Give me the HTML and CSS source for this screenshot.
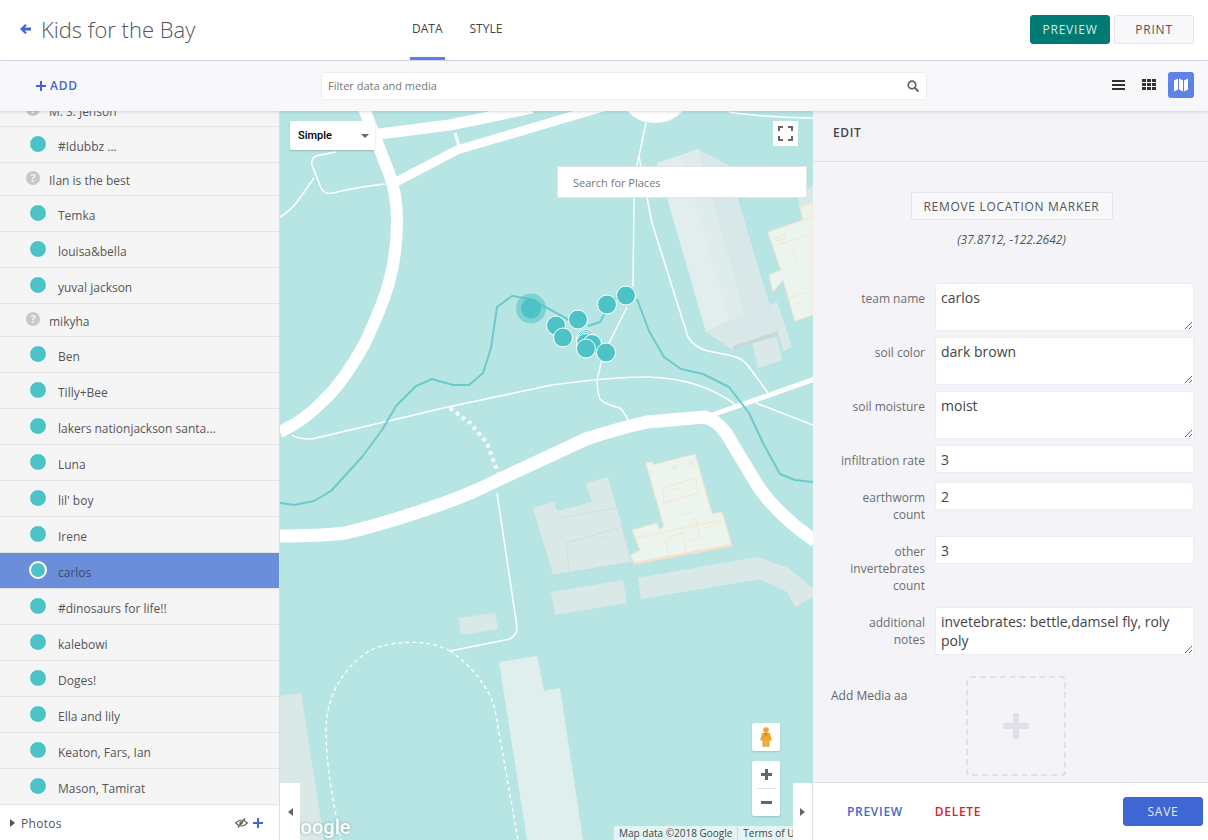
FILE: index.html
```html
<!DOCTYPE html>
<html lang="en">
<head>
    <meta charset="UTF-8">
    <title>Kids for the Bay</title>
    <link rel="stylesheet" href="styles.css">
</head>
<body>
    <header class="topbar">
        <div class="title-block">
            <svg class="back-icon" width="11" height="10" viewBox="0 0 11 10"><path d="M5.200 0 L6.800 1.600 L4.600 3.600 H11 V6.400 H4.600 L6.800 8.400 L5.200 10 L0 5 Z"/></svg>
            <span class="title">Kids for the Bay</span>
        </div>
        <nav class="tabs">
            <a class="tab tab-active">DATA</a>
            <a class="tab">STYLE</a>
        </nav>
        <div class="top-actions">
            <button class="btn btn-green">PREVIEW</button>
            <button class="btn">PRINT</button>
        </div>
    </header>

    <section class="toolbar">
        <div class="add-link">
            <svg width="10" height="10" viewBox="0 0 10 10"><path d="M4 0 H6 V4 H10 V6 H6 V10 H4 V6 H0 V4 H4 Z"/></svg>
            <span>ADD</span>
        </div>
        <div class="filter">
            <span>Filter data and media</span>
            <svg width="12" height="12" viewBox="0 0 12 12"><circle cx="5" cy="5" r="3.800" fill="none" stroke="#666" stroke-width="1.700"/><path d="M8 8 L11 11" stroke="#666" stroke-width="2" stroke-linecap="round"/></svg>
        </div>
        <div class="view-icons">
            <svg class="icon-list" width="13" height="10" viewBox="0 0 13 10"><path d="M0 0 H13 V2 H0 Z M0 4 H13 V6 H0 Z M0 8 H13 V10 H0 Z" fill="#333"/></svg>
            <svg class="icon-grid" width="14" height="11" viewBox="0 0 14 11"><path d="M0 0 H4 V3 H0 Z M5 0 H9 V3 H5 Z M10 0 H14 V3 H10 Z M0 4 H4 V7 H0 Z M5 4 H9 V7 H5 Z M10 4 H14 V7 H10 Z M0 8 H4 V11 H0 Z M5 8 H9 V11 H5 Z M10 8 H14 V11 H10 Z" fill="#333"/></svg>
            <span class="map-toggle">
                <svg width="14" height="14" viewBox="0 0 14 14"><path d="M0 2.500 L4 0.500 V11.500 L0 13.500 Z M5 0.500 L9 2.500 V13.500 L5 11.500 Z M10 2.500 L14 0.500 V11.500 L10 13.500 Z" fill="#fff"/></svg>
            </span>
        </div>
    </section>

    <main class="workspace">
        <aside class="sidebar">
            <ul class="rows">
                <li class="row row-none"><i class="no-loc">?</i>M. S. Jenson</li>
                <li class="row"><i class="dot"></i>#Idubbz ...</li>
                <li class="row row-none"><i class="no-loc">?</i>Ilan is the best</li>
                <li class="row"><i class="dot"></i>Temka</li>
                <li class="row"><i class="dot"></i>louisa&amp;bella</li>
                <li class="row"><i class="dot"></i>yuval jackson</li>
                <li class="row row-none"><i class="no-loc">?</i>mikyha</li>
                <li class="row"><i class="dot"></i>Ben</li>
                <li class="row"><i class="dot"></i>Tilly+Bee</li>
                <li class="row"><i class="dot"></i>lakers nationjackson santa...</li>
                <li class="row"><i class="dot"></i>Luna</li>
                <li class="row"><i class="dot"></i>lil' boy</li>
                <li class="row"><i class="dot"></i>Irene</li>
                <li class="row row-selected"><i class="dot"></i>carlos</li>
                <li class="row"><i class="dot"></i>#dinosaurs for life!!</li>
                <li class="row"><i class="dot"></i>kalebowi</li>
                <li class="row"><i class="dot"></i>Doges!</li>
                <li class="row"><i class="dot"></i>Ella and lily</li>
                <li class="row"><i class="dot"></i>Keaton, Fars, Ian</li>
                <li class="row"><i class="dot"></i>Mason, Tamirat</li>
            </ul>
            <div class="layer-bar">
                <svg class="caret" width="5" height="8" viewBox="0 0 5 8"><path d="M0 0 L5 4 L0 8 Z" fill="#555"/></svg>
                <span class="layer-name">Photos</span>
                <svg class="eye" width="13" height="10" viewBox="0 0 13 10"><path d="M0.700 5 Q6.500 -1 12.300 5 Q6.500 11 0.700 5 Z" fill="none" stroke="#666" stroke-width="1.200"/><circle cx="6" cy="5" r="1.800" fill="#666"/><path d="M3 9.500 L10 0.500" stroke="#666" stroke-width="1.400"/></svg>
                <svg width="10" height="10" viewBox="0 0 10 10"><path d="M4 0 H6 V4 H10 V6 H6 V10 H4 V6 H0 V4 H4 Z" fill="#3f66d2"/></svg>
            </div>
        </aside>

        <section class="map">
            <svg class="map-art" width="533" height="729" viewBox="280 111 533 729">
                <g class="bld">
                    <path d="M533,508 554,502 557,511 592,502 586,483 608,477 632,562 553,575Z"/>
                    <path d="M551,592 623,580 627,603 555,615Z"/>
                    <path d="M638,578 756,557 787,567 813,588 813,597 795,607 787,592 760,579 641,599Z"/>
                    <path d="M459,618 495,613 498,629 461,635Z"/>
                    <path d="M280,696 301,693 324,840 280,840Z"/>
                    <path d="M770,305 777,302 792,347 783,351Z"/>
                    <path d="M752,343 777,337 782,360 758,368Z"/>
                    <path d="M798,197 813,185 813,205 800,210Z"/>
                </g>
                <path class="bld-light" d="M499,662 537,656 544,691 560,688 583,840 527,840Z"/>
                <path d="M657,163 698,149 728,165 778,333 733,350 706,332Z" fill="#d8e7e7"/>
                <path d="M657,163 682,155 730,320 706,332Z" fill="#e2eeee"/>
                <path d="M682,155 698,149 745,315 730,320Z" fill="#dfecec"/>
                <path d="M706,332 730,320 733,350Z" fill="#d9e7e7"/>
                <path d="M733,346 778,331 778,335 733,350Z" fill="#c7d8d9"/>
                <path class="bld-line" d="M559,518 617,508 M566,543 622,527 630,560 M566,543 569,572 M553,575 632,562 M573,552 l3,-1 M590,546 l3,-1 M604,538 l4,-1 M618,540 l2,-1"/>
                <path class="peach" d="M646,463 652,462 653,465 695,454 712,514 722,512 732,546 634,564 631,555 640,550 632,530 657,523 659,529 664,527Z"/>
                <path class="peach-line" d="M662,488 696,478 698,493 664,503Z M635,538 722,520 M666,540 683,532 686,553 669,557Z M688,525 696,518 700,538 690,542 M704,528 722,522 M673,466 l4,-1 0,3 -4,1Z M689,462 l3,-1 1,4 -3,1Z M680,515 l12,-3 M671,490 l9,-2"/>
                <path class="peach-edge" d="M634,563 732,545"/>
                <path class="peach" d="M768,232 803,220 813,217 813,315 795,321 783,280 773,292 769,275 781,270Z"/>
                <path class="peach" d="M800,207 813,203 813,217 803,220Z"/>
                <path class="peach-line" d="M777,245 805,236 M775,238 l10,-3 1,3 -10,3Z M793,250 797,262 M785,300 806,292 M795,304 l8,-3"/>

                <g class="path-thin">
                    <path d="M336,152 Q318,155 314,157 Q311,160 312,165 L321,188 Q325,195 333,193 Q357,187 385,184"/>
                    <path d="M314,178 Q300,198 297,202 Q290,211 280,217"/>
                    <path d="M646,123 L637,165 L634,198 L633,287"/>
                    <path d="M639,157 L652,223 L688,337 Q695,348 708,351 Q730,355 736,357 Q744,360 749,367 L768,393"/>
                    <path d="M729,112 Q760,117 813,118"/>
                    <path d="M627,307 L612,337 Q604,352 601,363 L597,380 Q598,398 601,400 Q605,404 620,408 Q626,414 630,425"/>
                    <path d="M292,435 Q297,439 312,439 L448,407 L552,385 Q610,377 647,377 Q700,378 736,405"/>
                    <path d="M756,403 L813,425"/>
                    <path d="M497,493 L517,627 Q517,635 510,639 L450,651"/>
                </g>
                <path class="path-dash" d="M450,651 C430,640 400,640 375,648 C350,660 326,690 326,730 C326,770 335,810 341,840"/>
                <path class="path-dash" d="M450,651 C475,668 490,690 495,710 L518,840"/>
                <path class="path-dot" d="M450,408 L470,423 L487,443 L498,473"/>

                <g class="road">
                    <ellipse cx="655" cy="100" rx="31" ry="23" fill="#fff" stroke="none"/>
                    <path stroke-width="12" d="M363,106 L389,173 Q397,195 397,220 C397,270 385,300 365,343 C350,370 335,390 324,400 C310,415 295,425 280,432"/>
                    <path stroke-width="11" d="M379,134 L450,125 L532,108"/>
                    <path stroke-width="9" d="M396,182 L457,150 L613,104"/>
                    <path stroke-width="3" d="M455,133 L459,146"/>
                    <path stroke-width="13" d="M278,536 Q320,536 345,533 Q375,526 409,515 Q450,502 477,490 L498,480 L586,439 Q620,428 647,422 L705,417 Q716,420 726,433 L753,478 Q760,490 766,497 Q785,520 815,541"/>
                    <path stroke-width="5" d="M712,415 L815,379"/>
                </g>

                <g class="trail">
                    <path d="M569,320 L549,309 L530,299 L512,296 L497,307 L491,348 L483,373 L469,385 L453,385 L432,379 L416,386 L396,406 L382,430 L362,457 L331,491 L314,501 L294,505 L280,503"/>
                    <path d="M588,326 L600,322 L606,311 L617,297"/>
                    <path d="M637,299 L649,331 L664,357 L681,369 L703,374 L729,387 L749,413 L763,443 L780,474 L795,480 L813,482"/>
                </g>

                <circle cx="531" cy="308.500" r="15" fill="#4dc3c8" opacity=".55"/>
                <circle cx="531" cy="308.500" r="10" fill="#4dc3c8"/>
                <g class="marker">
                    <circle cx="556" cy="325.500" r="9.500"/>
                    <circle cx="578" cy="319.500" r="9.500"/>
                    <circle cx="563" cy="337.500" r="9.500"/>
                    <circle cx="607" cy="304.500" r="9.500"/>
                    <circle cx="626" cy="295.500" r="9.500"/>
                    <circle cx="586" cy="339" r="9.500"/>
                    <circle cx="586" cy="341" r="9.500"/>
                    <circle cx="586" cy="343" r="9.500"/>
                    <circle cx="592" cy="344" r="9.500"/>
                    <circle cx="606" cy="352.500" r="9.500"/>
                    <circle cx="586" cy="348.500" r="9.500"/>
                </g>
            </svg>

            <div class="map-type">
                <span>Simple</span>
                <svg width="8" height="4" viewBox="0 0 8 4"><path d="M0 0 H8 L4 4 Z" fill="#666"/></svg>
            </div>
            <div class="map-full">
                <svg width="15" height="15" viewBox="0 0 15 15"><path d="M1 5 V1 H5 M10 1 H14 V5 M14 10 V14 H10 M5 14 H1 V10" fill="none" stroke="#666" stroke-width="2"/></svg>
            </div>
            <div class="place-search">Search for Places</div>
            <div class="pegman">
                <svg width="12" height="20" viewBox="0 0 12 20"><circle cx="6" cy="3" r="2.800" fill="#f5a623"/><path d="M2.500 6 H9.500 L11.500 13 L10 13.500 L9.200 10.500 V19.500 H6.500 V13 H5.500 V19.500 H2.800 V10.500 L2 13.500 L0.500 13 Z" fill="#f5a623" stroke="#c98a1a" stroke-width=".4"/><path d="M5 6 L6 10 L7 6 Z" fill="#e2622c"/></svg>
            </div>
            <div class="zoom-box">
                <button class="zoom-btn"><svg width="11" height="11" viewBox="0 0 11 11"><path d="M4 0 H7 V4 H11 V7 H7 V11 H4 V7 H0 V4 H4 Z" fill="#666"/></svg></button>
                <button class="zoom-btn zoom-out"><svg width="11" height="3" viewBox="0 0 11 3"><path d="M0 0 H11 V3 H0 Z" fill="#666"/></svg></button>
            </div>
            <span class="g-logo">Google</span>
            <div class="attrib">
                <span class="attrib-item">Map data ©2018 Google</span>
                <span class="attrib-item">Terms of Use</span>
            </div>
            <div class="pane-toggle pane-left"><svg width="5" height="8" viewBox="0 0 5 8"><path d="M5 0 L0 4 L5 8 Z" fill="#666"/></svg></div>
            <div class="pane-toggle pane-right"><svg width="5" height="8" viewBox="0 0 5 8"><path d="M0 0 L5 4 L0 8 Z" fill="#666"/></svg></div>
        </section>

        <section class="panel">
            <div class="panel-head">EDIT</div>
            <div class="panel-body">
                <div class="location">
                    <button class="btn btn-remove">REMOVE LOCATION MARKER</button>
                    <em class="coords">(37.8712, -122.2642)</em>
                </div>
                <div class="field"><label>team name</label><textarea>carlos</textarea></div>
                <div class="field"><label>soil color</label><textarea>dark brown</textarea></div>
                <div class="field"><label>soil moisture</label><textarea>moist</textarea></div>
                <div class="field"><label>infiltration rate</label><input type="text" value="3"></div>
                <div class="field"><label>earthworm count</label><input type="text" value="2"></div>
                <div class="field"><label>other invertebrates count</label><input type="text" value="3"></div>
                <div class="field"><label>additional notes</label><textarea>invetebrates: bettle,damsel fly, roly poly</textarea></div>
                <div class="media">
                    <span class="media-label">Add Media aa</span>
                    <div class="media-drop">
                        <svg width="26" height="26" viewBox="0 0 26 26"><path d="M10 1 Q10 0 11 0 H15 Q16 0 16 1 V10 H25 Q26 10 26 11 V15 Q26 16 25 16 H16 V25 Q16 26 15 26 H11 Q10 26 10 25 V16 H1 Q0 16 0 15 V11 Q0 10 1 10 H10 Z" fill="#e0e0e8"/></svg>
                    </div>
                </div>
            </div>
            <div class="panel-foot">
                <a class="foot-link">PREVIEW</a>
                <a class="foot-link foot-delete">DELETE</a>
                <button class="btn btn-save">SAVE</button>
            </div>
        </section>
    </main>
</body>
</html>
```

FILE: styles.css
```css
* {
    box-sizing: border-box;
}

html, body {
    margin: 0;
    height: 100%;
}

body {
    width: 1208px;
    height: 840px;
    overflow: hidden;
    display: flex;
    flex-direction: column;
    font-family: "Open Sans", "Liberation Sans", sans-serif;
    font-size: 12px;
    color: #555;
    background-color: #fff;
}

button {
    font-family: inherit;
}

/* top bar */
.topbar {
    height: 61px;
    flex: none;
    display: flex;
    align-items: flex-start;
    border-bottom: 1px solid #dcdce8;
    background-color: #fff;
}

.title-block {
    width: 410px;
    height: 60px;
    padding-left: 20px;
    padding-bottom: 2px;
    display: flex;
    align-items: center;
}

.back-icon {
    fill: #3f66d2;
    margin-right: 10px;
}

.title {
    font-size: 22px;
    font-weight: 300;
    color: #555;
}

.tabs {
    display: flex;
    gap: 23px;
    height: 60px;
}

.tab {
    padding: 20px 2px 0;
    height: 60px;
    color: #444;
    border-bottom: 3px solid transparent;
}

.tab-active {
    border-bottom-color: #5f7ee6;
}

.top-actions {
    margin-left: auto;
    margin-top: 15px;
    margin-right: 14px;
    display: flex;
    gap: 4px;
}

.btn {
    width: 80px;
    height: 29px;
    padding: 0;
    font-size: 12px;
    letter-spacing: 0.8px;
    color: #555;
    background-color: #f8f8fb;
    border: 1px solid #e4e4ea;
    border-radius: 3px;
}

.btn-green {
    color: #d5ece9;
    background-color: #007a72;
    border-color: #007a72;
}

/* toolbar under it */
.toolbar {
    position: relative;
    z-index: 5;
    height: 50px;
    flex: none;
    display: flex;
    align-items: center;
    background-color: #f8f8fb;
    box-shadow: 0 1px 3px rgba(60, 60, 90, 0.18);
}

.add-link {
    width: 321px;
    padding-left: 36px;
    padding-bottom: 1px;
    display: flex;
    align-items: center;
    gap: 4px;
    font-weight: 600;
    letter-spacing: 0.8px;
    color: #3f66d2;
}

.add-link svg {
    fill: #3f66d2;
}

.filter {
    width: 606px;
    height: 28px;
    padding: 0 7px 0 6px;
    display: flex;
    align-items: center;
    justify-content: space-between;
    font-size: 11px;
    color: #777;
    background-color: #fff;
    border: 1px solid #ecedf2;
    border-radius: 3px;
}

.filter span {
    margin-top: -2px;
}

.view-icons {
    margin-left: auto;
    margin-right: 14px;
    display: flex;
    align-items: center;
}

.icon-list {
    margin-right: 17px;
    margin-top: -3px;
}

.icon-grid {
    margin-right: 12px;
    margin-top: -3px;
}

.map-toggle {
    width: 26px;
    height: 26px;
    margin-top: -3px;
    display: flex;
    align-items: center;
    justify-content: center;
    background-color: #5f82e8;
    border-radius: 3px;
}

/* three panes */
.workspace {
    flex: 1;
    display: flex;
    min-height: 0;
}

.sidebar {
    width: 280px;
    flex: none;
    display: flex;
    flex-direction: column;
    border-right: 1px solid #dedee2;
    background-color: #f5f5f5;
}

.rows {
    flex: 1;
    min-height: 0;
    overflow: hidden;
    margin: 0;
    padding: 0;
    list-style: none;
}

.row {
    height: 36px;
    padding-left: 29px;
    padding-top: 4px;
    display: flex;
    align-items: center;
    gap: 11px;
    color: #555;
    border-bottom: 1px solid #e4e4e4;
}

.row:first-child {
    margin-top: -17px;
}

.row-none {
    height: 33px;
    padding-left: 26px;
    padding-top: 2px;
    gap: 9px;
}

.dot {
    width: 18px;
    height: 18px;
    flex: none;
    margin-top: -6px;
    background-color: #4dc3c8;
    border: 1px solid #fff;
    border-radius: 50%;
}

.no-loc {
    width: 14px;
    height: 14px;
    flex: none;
    margin-top: -5px;
    font-size: 11px;
    font-style: normal;
    font-weight: 700;
    line-height: 14px;
    text-align: center;
    color: #f5f5f5;
    background-color: #c8c8c8;
    border-radius: 50%;
}

.row-selected {
    color: #3f4a66;
    background-color: #6b8edb;
}

.row-selected .dot {
    border: 2px solid #fff;
    background-color: #4dc3c8;
}

.layer-bar {
    height: 35px;
    flex: none;
    padding: 0 16px 0 10px;
    display: flex;
    align-items: center;
    background-color: #fff;
}

.layer-name {
    margin-left: 6px;
    margin-top: 2px;
    letter-spacing: 0.3px;
    color: #555;
}

.eye {
    margin-left: auto;
    margin-right: 5px;
}

/* map */
.map {
    position: relative;
    width: 533px;
    flex: none;
    overflow: hidden;
    background-color: #b7e5e4;
}

.map-art {
    display: block;
}

.bld path {
    fill: #dbe8e8;
}

.bld-light {
    fill: #e1eeee;
}

.peach {
    fill: #ecf4ee;
    stroke: #f9e3cd;
    stroke-width: 1;
}

.peach-line {
    fill: none;
    stroke: #f8dfc8;
    stroke-width: 0.8;
}

.peach-edge {
    fill: none;
    stroke: #f8dfc8;
    stroke-width: 2;
}

.bld-line {
    fill: none;
    stroke: #c9dada;
    stroke-width: 0.7;
}

.path-thin path {
    fill: none;
    stroke: #fff;
    stroke-width: 1.5;
}

.path-dash {
    fill: none;
    stroke: #fff;
    stroke-width: 1.3;
    stroke-dasharray: 4 3;
}

.path-dot {
    fill: none;
    stroke: #fff;
    stroke-width: 4;
    stroke-dasharray: 3.5 4;
}

.road path {
    fill: none;
    stroke: #fff;
    stroke-linejoin: round;
}

.trail path {
    fill: none;
    stroke: #6ccaca;
    stroke-width: 2;
    stroke-linejoin: round;
}

.marker circle {
    fill: #4dc3c8;
    stroke: #fff;
    stroke-width: 1;
}

.map-type {
    position: absolute;
    left: 10px;
    top: 10px;
    width: 85px;
    height: 29px;
    padding: 0 6px 0 8px;
    display: flex;
    align-items: center;
    justify-content: space-between;
    font-family: Roboto, sans-serif;
    font-size: 11px;
    font-weight: 500;
    color: #000;
    background-color: #fff;
    border-radius: 2px;
    box-shadow: 0 1px 2px rgba(0, 0, 0, 0.2);
}

.map-full {
    position: absolute;
    left: 493px;
    top: 10px;
    width: 25px;
    height: 25px;
    display: flex;
    align-items: center;
    justify-content: center;
    background-color: #fff;
}

.place-search {
    position: absolute;
    left: 277px;
    top: 55px;
    width: 250px;
    height: 32px;
    padding-left: 15px;
    line-height: 31px;
    font-size: 11px;
    color: #777;
    background-color: #fff;
    border: 1px solid #e3e3ea;
}

.pegman {
    position: absolute;
    left: 472px;
    top: 612px;
    width: 28px;
    height: 28px;
    display: flex;
    align-items: center;
    justify-content: center;
    background-color: #fff;
    border-radius: 2px;
    box-shadow: 0 1px 2px rgba(0, 0, 0, 0.15);
}

.zoom-box {
    position: absolute;
    left: 472px;
    top: 650px;
    width: 28px;
    height: 55px;
    display: flex;
    flex-direction: column;
    padding: 0 4px;
    background-color: #fff;
    border-radius: 2px;
    box-shadow: 0 1px 2px rgba(0, 0, 0, 0.15);
}

.zoom-btn {
    flex: 1;
    padding: 0;
    display: flex;
    align-items: center;
    justify-content: center;
    background: none;
    border: none;
}

.zoom-out {
    border-top: 1px solid #e4e4e4;
}

.g-logo {
    position: absolute;
    left: 7px;
    bottom: 0;
    font-family: Roboto, sans-serif;
    font-size: 20px;
    font-weight: 500;
    line-height: 26px;
    color: #fff;
    text-shadow: 0 0 3px rgba(90, 120, 120, 0.6);
}

.attrib {
    position: absolute;
    left: 334px;
    bottom: 0;
    height: 14px;
    display: flex;
    gap: 1px;
    font-size: 10px;
    line-height: 14px;
    white-space: nowrap;
    color: #444;
}

.attrib-item {
    padding: 0 5px;
    background-color: rgba(255, 255, 255, 0.6);
}

.pane-toggle {
    position: absolute;
    bottom: 0;
    width: 20px;
    height: 57px;
    display: flex;
    align-items: center;
    justify-content: center;
    background-color: #fff;
}

.pane-left {
    left: 0;
}

.pane-right {
    right: 0;
    border-right: 1px solid #dcdce8;
}

/* edit panel */
.panel {
    flex: 1;
    min-width: 0;
    display: flex;
    flex-direction: column;
    background-color: #f3f3f8;
}

.panel-head {
    height: 51px;
    flex: none;
    padding: 13px 0 0 20px;
    font-weight: 600;
    letter-spacing: 0.6px;
    color: #444;
    border-bottom: 1px solid #e0e0e8;
}

.panel-body {
    flex: 1;
    min-height: 0;
    overflow: hidden;
    padding: 30px 14px 0 22px;
}

.location {
    display: flex;
    flex-direction: column;
    align-items: center;
    height: 91px;
}

.btn-remove {
    width: 202px;
    height: 28px;
    margin-right: 6px;
    letter-spacing: 0.7px;
}

.coords {
    margin-top: 11px;
    margin-right: 6px;
    color: #555;
}

.field {
    display: flex;
    align-items: flex-start;
    gap: 10px;
}

.field label {
    width: 90px;
    flex: none;
    padding: 7px 0 13px;
    line-height: 17px;
    text-align: right;
    color: #6e6e6e;
}

.field textarea,
.field input {
    display: block;
    width: 259px;
    margin: 0 0 6px;
    padding: 4px 5px;
    font-family: inherit;
    font-size: 14px;
    line-height: 19px;
    color: #444;
    background-color: #fff;
    border: 1px solid #ecedf2;
    border-radius: 2px;
}

.field textarea {
    height: 48px;
}

.field input {
    height: 28px;
}

.media {
    display: flex;
    align-items: flex-start;
    margin-top: 15px;
    margin-left: -4px;
}

.media-label {
    width: 135px;
    padding-top: 11px;
    color: #666;
}

.media-drop {
    width: 100px;
    height: 100px;
    flex: none;
    display: flex;
    align-items: center;
    justify-content: center;
    border: 2px dashed #e0e0e8;
    border-radius: 4px;
}

.panel-foot {
    height: 58px;
    flex: none;
    padding: 0 5px 0 34px;
    display: flex;
    align-items: center;
    background-color: #fff;
    border-top: 1px solid #e0e0e8;
}

.foot-link {
    font-weight: 600;
    letter-spacing: 0.7px;
    color: #3f66d2;
}

.foot-delete {
    margin-left: 32px;
    color: #d8232f;
}

.btn-save {
    margin-left: auto;
    color: #e4eaf8;
    background-color: #3f66d2;
    border-color: #3f66d2;
}
```
